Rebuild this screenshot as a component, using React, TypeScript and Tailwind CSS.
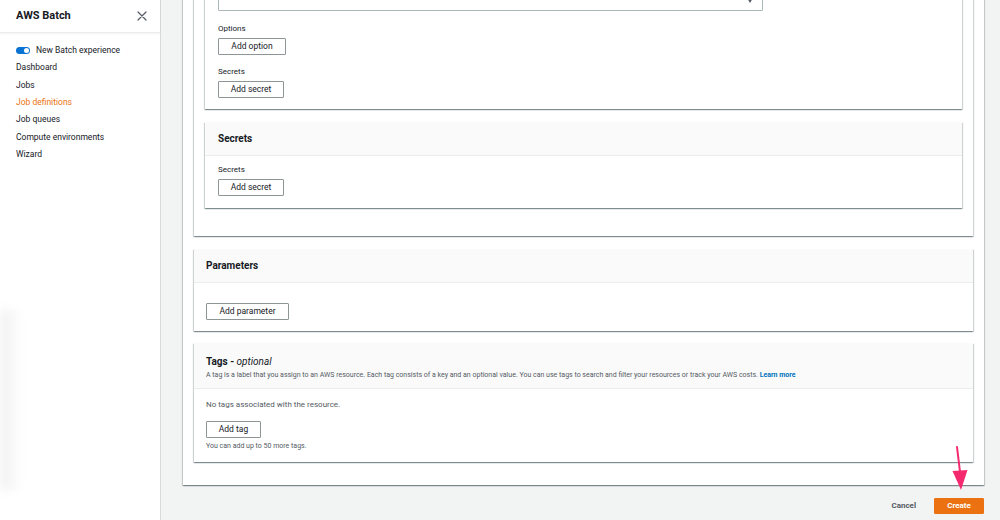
import React from "react";

const cardShadow =
  "shadow-[0_1px_1px_0_rgba(0,28,36,0.3),1px_1px_1px_0_rgba(0,28,36,0.15),-1px_1px_1px_0_rgba(0,28,36,0.15)]";

function Btn({ children, w }: { children: React.ReactNode; w: string }) {
  return (
    <button
      className={`h-[17px] ${w} border border-[#8d9596] bg-white rounded-[1px] text-[8.5px] text-[#16191f] font-normal flex items-center justify-center leading-none`}
    >
      {children}
    </button>
  );
}

function Label({ children }: { children: React.ReactNode }) {
  return <div className="text-[8px] leading-[10px] text-[#16191f]">{children}</div>;
}

function Sidebar() {
  const items = ["Dashboard", "Jobs", "Job definitions", "Job queues", "Compute environments", "Wizard"];
  return (
    <div className="relative w-[161px] shrink-0 bg-white border-r border-[#d5dbdb] h-full">
      <div className="pointer-events-none absolute left-0 top-[310px] h-[180px] w-[22px] bg-linear-to-r from-[#efefef] to-transparent blur-[5px]" />
      <div className="h-[33px] flex items-center justify-between pl-[16px] pr-[13px] border-b border-[#eaeded] shadow-[0_1px_2px_rgba(0,0,0,0.05)]">
        <span className="text-[11px] font-bold text-[#16191f]">AWS Batch</span>
        <svg width="10" height="10" viewBox="0 0 10 10">
          <path d="M1 1 L9 9 M9 1 L1 9" stroke="#545b64" strokeWidth="1.2" strokeLinecap="round" />
        </svg>
      </div>
      <div className="pt-[9px] pl-[16px] flex flex-col text-[8.5px] leading-[17.33px] text-[#16191f]">
        <div className="flex items-center gap-[6px]">
          <span className="w-[14px] h-[7px] rounded-full bg-[#0972d3] relative flex items-center justify-end pr-[1px]">
            <span className="w-[5px] h-[5px] rounded-full bg-white" />
          </span>
          <span>New Batch experience</span>
        </div>
        {items.map((it) => (
          <div key={it} className={it === "Job definitions" ? "text-[#ec7211]" : ""}>
            {it}
          </div>
        ))}
      </div>
    </div>
  );
}

function Main() {
  return (
    <div className="relative flex-1 bg-[#f2f3f3] h-full overflow-hidden">
      <div className="-mt-[40px] ml-[22px] w-[801px]">
        {/* outer card */}
        <div className={`bg-white ${cardShadow} px-[11px] pt-[11px] pb-[23px] flex flex-col`}>
          {/* level 2 card */}
          <div className={`bg-white ${cardShadow} px-[11px] pt-[11px] pb-[28px] flex flex-col gap-[13px]`}>
            {/* inner 1 */}
            <div className={`bg-white ${cardShadow} px-[13px] pt-[7px] pb-[11px] flex flex-col`}>
              <div className="h-[22px] w-[545px] border border-[#aab7b8] rounded-[1px] flex items-center justify-end pr-[9px]">
                <svg width="6" height="5" viewBox="0 0 6 5">
                  <path d="M0 0 L6 0 L3 5 Z" fill="#545b64" />
                </svg>
              </div>
              <div className="mt-[13px]">
                <Label>Options</Label>
              </div>
              <div className="mt-[4px]">
                <Btn w="w-[68px]">Add option</Btn>
              </div>
              <div className="mt-[12px]">
                <Label>Secrets</Label>
              </div>
              <div className="mt-[4px]">
                <Btn w="w-[66px]">Add secret</Btn>
              </div>
            </div>
            {/* secrets card */}
            <div className={`bg-white ${cardShadow} flex flex-col`}>
              <div className="h-[34px] bg-[#fafafa] border-b border-[#eaeded] flex items-center px-[13px]">
                <span className="text-[10px] font-bold text-[#16191f]">Secrets</span>
              </div>
              <div className="px-[13px] pt-[9px] pb-[12px] flex flex-col gap-[4px]">
                <Label>Secrets</Label>
                <Btn w="w-[66px]">Add secret</Btn>
              </div>
            </div>
          </div>

          {/* parameters */}
          <div className={`mt-[13px] bg-white ${cardShadow} flex flex-col`}>
            <div className="h-[34px] bg-[#fafafa] border-b border-[#eaeded] flex items-center px-[12px]">
              <span className="text-[10px] font-bold text-[#16191f]">Parameters</span>
            </div>
            <div className="px-[12px] pt-[20px] pb-[11px]">
              <Btn w="w-[83px]">Add parameter</Btn>
            </div>
          </div>

          {/* tags */}
          <div className={`mt-[12px] bg-white ${cardShadow} flex flex-col`}>
            <div className="h-[46px] bg-[#fafafa] border-b border-[#eaeded] flex flex-col justify-center px-[12px] pt-[3px]">
              <div className="text-[10px] font-bold text-[#16191f] leading-[13px]">
                Tags - <span className="italic font-normal">optional</span>
              </div>
              <div className="text-[7px] leading-[10px] text-[#545b64] mt-[2px]">
                A tag is a label that you assign to an AWS resource. Each tag consists of a key and an optional value. You can use tags to search and filter your resources or track your AWS costs.{" "}
                <span className="text-[#0073bb] font-bold">Learn more</span>
              </div>
            </div>
            <div className="px-[12px] pt-[10px] pb-[11px] flex flex-col">
              <div className="text-[8px] leading-[11px] text-[#545b64]">No tags associated with the resource.</div>
              <div className="mt-[11px]">
                <Btn w="w-[55px]">Add tag</Btn>
              </div>
              <div className="mt-[3px] text-[7px] leading-[10px] text-[#545b64]">You can add up to 50 more tags.</div>
            </div>
          </div>
        </div>

        {/* footer */}
        <div className="mt-[13px] flex items-center justify-end gap-[18px]">
          <span className="text-[8px] font-bold text-[#545b64]">Cancel</span>
          <button className="h-[16px] w-[50px] bg-[#ec7211] border border-[#ec7211] rounded-[1px] text-[8px] font-bold text-white flex items-center justify-center">
            Create
          </button>
        </div>
      </div>
    </div>
  );
}

export default function App() {
  return (
    <div
      className="relative w-[1000px] h-[520px] flex overflow-hidden bg-white"
      style={{ fontFamily: "Roboto, 'Liberation Sans', sans-serif" }}
    >
      <Sidebar />
      <Main />
      <svg className="absolute left-0 top-0 pointer-events-none" width="1000" height="520">
        <line x1="957" y1="447" x2="960.5" y2="476" stroke="#f5296e" strokeWidth="2" strokeLinecap="round" />
        <path d="M952.5 471 L967.5 470 L961 490 Z" fill="#f5296e" />
      </svg>
    </div>
  );
}
